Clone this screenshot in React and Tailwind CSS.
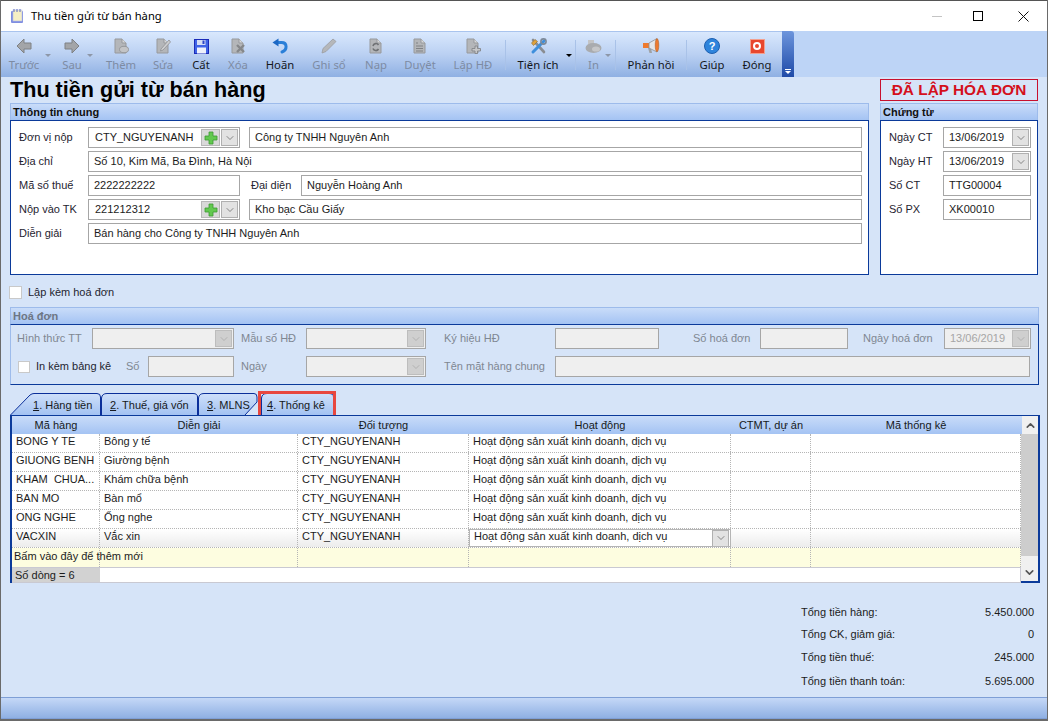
import { ChevronDown, ChevronUp } from "lucide-react";

const gray = "#a3a5a8";
const grayDark = "#7f8184";

function ArrowIcon({ flip }) {
  return (
    <svg width="16" height="16" viewBox="0 0 16 16" style={flip ? { transform: "scaleX(-1)" } : undefined}>
      <path d="M8 1 L1 8 L8 15 L8 11 L15 11 L15 5 L8 5 Z" fill={gray} stroke={grayDark} strokeWidth="1" strokeLinejoin="round" />
    </svg>
  );
}

function DocBase({ children }) {
  return (
    <svg width="16" height="16" viewBox="0 0 16 16">
      <path d="M2 1 H9 L13 5 V15 H2 Z" fill="#b4b6b9" stroke="#97999c" strokeWidth="1" />
      <path d="M9 1 V5 H13" fill="#d8d9da" stroke="#97999c" strokeWidth="1" />
      {children}
    </svg>
  );
}

const AddIcon = () => (
  <DocBase>
    <ellipse cx="11" cy="11.5" rx="4.5" ry="3.2" fill="#c3c4c6" stroke="#97999c" />
  </DocBase>
);
const EditIcon = () => (
  <DocBase>
    <path d="M6 11 L14 2 L15.5 4 L8 12 L5.5 13 Z" fill="#cfd0d2" stroke="#8f9194" strokeWidth="0.8" />
  </DocBase>
);
const DeleteIcon = () => (
  <DocBase>
    <path d="M7 7 L14 14 M14 7 L7 14" stroke="#85878a" strokeWidth="2.4" />
  </DocBase>
);
const ReloadIcon = () => (
  <DocBase>
    <path d="M5 8 A3 3 0 0 1 10.5 7 M10.5 11 A3 3 0 0 1 5 10.5" fill="none" stroke="#6f7174" strokeWidth="1.6" />
  </DocBase>
);
const ListIcon = () => (
  <DocBase>
    <path d="M4 5 H6 M4 8 H11 M4 10.5 H11 M4 13 H11" stroke="#808285" strokeWidth="1.1" />
  </DocBase>
);
const InvoiceIcon = () => (
  <DocBase>
    <path d="M10 8 H12.5 V10.5 H15.5 V13 H12.5 V15.5 H10 V13 H7 V10.5 H10 Z" fill="#c6c7c9" stroke="#85878a" strokeWidth="0.9" />
  </DocBase>
);

function SaveIcon() {
  return (
    <svg width="15" height="15" viewBox="0 0 15 15">
      <rect x="0.5" y="0.5" width="14" height="14" fill="#3f63e6" stroke="#1a2bb8" />
      <rect x="3" y="1" width="8.5" height="5" fill="#d5ddf4" />
      <rect x="8.5" y="1.5" width="2" height="3.5" fill="#2b45c8" />
      <rect x="3" y="8.5" width="9" height="6" fill="#eef1fb" />
    </svg>
  );
}

function UndoIcon() {
  return (
    <svg width="16" height="16" viewBox="0 0 16 16">
      <path d="M5.5 4.5 H9.5 C15.5 4.5 15.5 12 10 14" fill="none" stroke="#2a7fd8" strokeWidth="3" strokeLinecap="round" />
      <path d="M0.5 4.5 L6.5 0.5 L6.5 8.5 Z" fill="#1c68c4" />
    </svg>
  );
}

function PencilIcon() {
  return (
    <svg width="16" height="16" viewBox="0 0 16 16">
      <path d="M1 15 L2 10.5 L12 1 L15 3.5 L5 13.5 Z" fill="#b5b7ba" stroke="#9a9c9f" strokeWidth="0.8" />
    </svg>
  );
}

function ToolsIcon() {
  return (
    <svg width="17" height="17" viewBox="0 0 17 17">
      <path d="M3 2 L14 14" stroke="#8a8d92" strokeWidth="2.6" strokeLinecap="round" />
      <path d="M1.5 5 L5 1.5 L7.5 3.5 L3.5 7.5 Z" fill="#e0a23c" stroke="#8a6a2a" strokeWidth="0.6" />
      <path d="M14 3 L3 14" stroke="#3e8fdc" strokeWidth="3" strokeLinecap="round" />
      <circle cx="13.5" cy="3.5" r="2.6" fill="none" stroke="#7c8a9a" strokeWidth="1.6" />
    </svg>
  );
}

function PrinterIcon() {
  return (
    <svg width="17" height="17" viewBox="0 0 17 17">
      <path d="M3 2 H9 V7 H3 Z" fill="#c3c4c6" />
      <ellipse cx="8.5" cy="10" rx="8" ry="5" fill="#a9abae" />
      <ellipse cx="11" cy="11" rx="4" ry="2.6" fill="#c5c6c8" />
    </svg>
  );
}

function MegaphoneIcon() {
  return (
    <svg width="18" height="18" viewBox="0 0 18 18">
      <path d="M6 11 L9 11 L10 16 L7.5 16 Z" fill="#a0a2a5" />
      <path d="M1 6 H7 V11 H1 Z" fill="#ee7a2e" />
      <path d="M7 6 L15 1.5 V15 L7 11 Z" fill="#e4e6e9" stroke="#8d9094" strokeWidth="0.8" />
      <ellipse cx="15" cy="8.2" rx="1.8" ry="6.6" fill="#ee7a2e" stroke="#a85a22" strokeWidth="0.5" />
    </svg>
  );
}

function HelpIcon() {
  return (
    <div className="w-[16px] h-[16px] rounded-full bg-[#2e84dc] border border-[#1d5fb0] flex items-center justify-center text-white text-[11px] font-bold leading-none">
      ?
    </div>
  );
}

function CloseIcon() {
  return (
    <div className="w-[15px] h-[15px] bg-[#e8472e] border border-[#f2a08f] flex items-center justify-center">
      <div className="w-[8px] h-[8px] rounded-full border-2 border-white" />
    </div>
  );
}

function ToolItem({ label, width, icon, off, caret, className = "" }) {
  return (
    <div className={`relative flex flex-col items-center h-full shrink-0 pt-[5px] ${width} ${className}`}>
      <div className="h-[18px] flex items-center justify-center">{icon}</div>
      <span className={`mt-[2px] text-[11.3px] leading-[16px] whitespace-nowrap ${off ? "text-[#7d8ba3]" : "text-[#14171c]"}`} style={{ fontFamily: '"Noto Sans", sans-serif' }}>{label}</span>
      {caret}
    </div>
  );
}

const ToolSep = () => <div className="w-px h-[30px] mt-[8px] bg-[#e8f0fc] border-l border-[#a9c2e8] shrink-0" />;

const GrayCaret = ({ className }) => <span className={`absolute top-[22px] w-0 h-0 border-x-[3px] border-x-transparent border-t-[3px] border-t-[#8d97a8] ${className}`} />;

function Toolbar() {
  return (
    <div className="h-[46px] flex bg-[#bdd4f6] shrink-0">
      <div className="w-[781px] flex bg-gradient-to-b from-[#d9e8fd] via-[#bad0f2] to-[#8fb0e3] border-t border-[#a9c4ee]">
        <ToolItem label="Trước" width="w-[46px]" icon={<ArrowIcon />} off caret={<GrayCaret className="right-[-4px]" />} />
        <ToolItem label="Sau" width="w-[50px]" icon={<ArrowIcon flip />} off caret={<GrayCaret className="right-[4px]" />} />
        <ToolItem label="Thêm" width="w-[48px]" icon={<AddIcon />} off />
        <ToolItem label="Sửa" width="w-[36px]" icon={<EditIcon />} off />
        <ToolItem label="Cất" width="w-[40px]" icon={<SaveIcon />} />
        <ToolItem label="Xóa" width="w-[34px]" icon={<DeleteIcon />} off />
        <ToolItem label="Hoãn" width="w-[50px]" icon={<UndoIcon />} />
        <ToolItem label="Ghi sổ" width="w-[48px]" icon={<PencilIcon />} off />
        <ToolItem label="Nạp" width="w-[46px]" icon={<ReloadIcon />} off />
        <ToolItem label="Duyệt" width="w-[42px]" icon={<ListIcon />} off />
        <ToolItem label="Lập HĐ" width="w-[64px]" icon={<InvoiceIcon />} off />
        <ToolSep />
        <ToolItem
          label="Tiện ích"
          width="w-[69px]"
          icon={<ToolsIcon />}
          className="pr-[5px]"
          caret={<span className="absolute top-[22px] right-[3px] w-0 h-0 border-x-[3px] border-x-transparent border-t-[3px] border-t-black" />}
        />
        <ToolSep />
        <ToolItem label="In" width="w-[39px]" icon={<PrinterIcon />} off className="pr-[4px]" caret={<GrayCaret className="right-[4px]" />} />
        <ToolSep />
        <ToolItem label="Phản hồi" width="w-[70px]" icon={<MegaphoneIcon />} />
        <ToolSep />
        <ToolItem label="Giúp" width="w-[50px]" icon={<HelpIcon />} />
        <ToolItem label="Đóng" width="w-[40px]" icon={<CloseIcon />} />
      </div>
      <div className="w-[12px] rounded-tr-[3px] bg-gradient-to-b from-[#6d95dc] to-[#1f4aa8] flex flex-col items-center justify-end pb-[3px]">
        <span className="w-[6px] h-px bg-white mb-px" />
        <span className="w-0 h-0 border-x-[3px] border-x-transparent border-t-[3px] border-t-white" />
      </div>
    </div>
  );
}

function TitleBar() {
  return (
    <div className="h-[30px] bg-white flex items-center shrink-0" style={{ fontFamily: '"Noto Sans", sans-serif' }}>
      <svg className="ml-[9px]" width="14" height="16" viewBox="0 0 14 16">
        <rect x="1" y="3" width="12" height="12" rx="1" fill="#7f8ee0" />
        <rect x="3" y="2" width="9" height="11" fill="#f6efc4" stroke="#b9c0e6" strokeWidth="0.6" />
        <path d="M4 1 V4 M7 1 V4 M10 1 V4" stroke="#5b6bc0" strokeWidth="1" />
      </svg>
      <span className="ml-[7px] text-[11.2px] text-black">Thu tiền gửi từ bán hàng</span>
      <div className="ml-auto flex items-center">
        <span className="w-[10px] h-px bg-[#c4c4c4] mr-[31px]" />
        <span className="w-[10px] h-[10px] border border-black mr-[35px]" />
        <svg className="mr-[18px]" width="11" height="11" viewBox="0 0 11 11">
          <path d="M0.5 0.5 L10.5 10.5 M10.5 0.5 L0.5 10.5" stroke="#111" strokeWidth="1" />
        </svg>
      </div>
    </div>
  );
}

function PanelHead({ title, muted }) {
  return (
    <div className={`h-[17px] px-[2px] flex items-center bg-gradient-to-b from-[#c9dcf9] to-[#a4c3f3] border-t border-x border-t-[#9dbbeb] border-x-[#9dbbeb] border-b-0 text-[11px] font-bold ${muted ? "text-[#6d7684]" : "text-[#111]"}`}>
      {title}
    </div>
  );
}

function Field({ value, width, className = "", off }) {
  return (
    <div className={`h-[21px] shrink-0 flex items-center border border-[#a6a6a6] pl-[5px] text-[11px] whitespace-nowrap overflow-hidden ${off ? "bg-[#efefef] text-[#a6a6a6]" : "bg-white text-[#1c1c1c]"} ${width} ${className}`}>
      {value}
    </div>
  );
}

function DropBtn({ off }) {
  return (
    <span className={`w-[17px] h-[17px] shrink-0 flex items-center justify-center border ${off ? "bg-[#cfcfcf] border-[#bdbdbd] text-[#9d9d9d]" : "bg-[#e2e2e2] border-[#b0b0b0] text-[#444]"}`}>
      <ChevronDown size={12} strokeWidth={1.2} />
    </span>
  );
}

function Combo({ value, width, className = "", off, plus }) {
  return (
    <div className={`h-[21px] shrink-0 flex items-center border border-[#a6a6a6] pl-[6px] pr-px text-[11px] ${off ? "bg-[#efefef] text-[#a6a6a6]" : "bg-white text-[#1c1c1c]"} ${width} ${className}`}>
      <span className="flex-1 whitespace-nowrap">{value}</span>
      {plus && (
        <span className="w-[19px] h-[17px] mr-px bg-[#d9d9d9] border border-[#b8b8b8] flex items-center justify-center">
          <svg width="14" height="14" viewBox="0 0 14 14">
            <path d="M5 1 H9 V5 H13 V9 H9 V13 H5 V9 H1 V5 H5 Z" fill="#62c94f" stroke="#3d9a33" strokeWidth="0.8" />
          </svg>
        </span>
      )}
      <DropBtn off={off} />
    </div>
  );
}

function Label({ children, width, className = "", off }) {
  return (
    <span className={`shrink-0 text-[11px] whitespace-nowrap ${off ? "text-[#7f8792]" : "text-[#1f2430]"} ${width} ${className}`}>
      {children}
    </span>
  );
}

function GeneralPanel() {
  return (
    <div className="w-[859px] h-[172px] flex flex-col">
      <PanelHead title="Thông tin chung" />
      <div className="flex-1 bg-white border border-[#0b3a9a] pl-[8px] pr-[4px] pt-[6px] flex flex-col gap-[3px]">
        <div className="flex items-center">
          <Label width="w-[69px]">Đơn vị nộp</Label>
          <Combo value="CTY_NGUYENANH" plus width="w-[152px]" />
          <Field value="Công ty TNHH Nguyên Anh" width="w-[613px]" className="ml-[9px]" />
        </div>
        <div className="flex items-center">
          <Label width="w-[69px]">Địa chỉ</Label>
          <Field value="Số 10, Kim Mã, Ba Đình, Hà Nội" width="w-[774px]" />
        </div>
        <div className="flex items-center">
          <Label width="w-[69px]">Mã số thuế</Label>
          <Field value="2222222222" width="w-[152px]" />
          <Label width="w-[50px]" className="ml-[11px]">Đại diện</Label>
          <Field value="Nguyễn Hoàng Anh" width="w-[561px]" />
        </div>
        <div className="flex items-center">
          <Label width="w-[69px]">Nộp vào TK</Label>
          <Combo value="221212312" plus width="w-[152px]" />
          <Field value="Kho bạc Cầu Giấy" width="w-[613px]" className="ml-[9px]" />
        </div>
        <div className="flex items-center">
          <Label width="w-[69px]">Diễn giải</Label>
          <Field value="Bán hàng cho Công ty TNHH Nguyên Anh" width="w-[774px]" />
        </div>
      </div>
    </div>
  );
}

function VoucherPanel() {
  return (
    <div className="w-[158px] h-[172px] flex flex-col">
      <PanelHead title="Chứng từ" />
      <div className="flex-1 bg-white border border-[#0b3a9a] pl-[8px] pt-[6px] flex flex-col gap-[3px]">
        <div className="flex items-center">
          <Label width="w-[54px]">Ngày CT</Label>
          <Combo value="13/06/2019" width="w-[88px]" className="!pl-[5px]" />
        </div>
        <div className="flex items-center">
          <Label width="w-[54px]">Ngày HT</Label>
          <Combo value="13/06/2019" width="w-[88px]" className="!pl-[5px]" />
        </div>
        <div className="flex items-center">
          <Label width="w-[54px]">Số CT</Label>
          <Field value="TTG00004" width="w-[88px]" />
        </div>
        <div className="flex items-center">
          <Label width="w-[54px]">Số PX</Label>
          <Field value="XK00010" width="w-[88px]" />
        </div>
      </div>
    </div>
  );
}

function InvoicePanel() {
  return (
    <div className="w-[1029px] h-[78px] flex flex-col">
      <PanelHead title="Hoá đơn" muted />
      <div className="flex-1 border border-[#0b3a9a] border-l-[#9dbbeb] pl-[6px] pt-[3px]">
        <div className="flex items-center">
          <Label off width="w-[75px]">Hình thức TT</Label>
          <Combo off width="w-[142px]" />
          <Label off width="w-[65px]" className="ml-[7px]">Mẫu số HĐ</Label>
          <Combo off width="w-[120px]" />
          <Label off width="w-[111px]" className="ml-[18px]">Ký hiệu HĐ</Label>
          <Field off width="w-[104px]" />
          <Label off width="w-[67px]" className="ml-[34px]">Số hoá đơn</Label>
          <Field off width="w-[88px]" />
          <Label off width="w-[81px]" className="ml-[15px]">Ngày hoá đơn</Label>
          <Combo off value="13/06/2019" width="w-[87px]" className="!pl-[5px]" />
        </div>
        <div className="flex items-center mt-[7px]">
          <span className="w-[12px] h-[12px] bg-white border border-[#c9c9c9] ml-px shrink-0" />
          <Label width="w-[90px]" className="ml-[6px]">In kèm bảng kê</Label>
          <Label off width="w-[22px]">Số</Label>
          <Field off width="w-[86px]" />
          <Label off width="w-[65px]" className="ml-[7px]">Ngày</Label>
          <Combo off width="w-[120px]" />
          <Label off width="w-[111px]" className="ml-[18px]">Tên mặt hàng chung</Label>
          <Field off width="w-[475px]" />
        </div>
      </div>
    </div>
  );
}

function TabShape({ path, width, id }) {
  return (
    <svg className="absolute inset-0" width={width} height="25" viewBox={`0 0 ${width} 25`}>
      <defs>
        <linearGradient id={id} x1="0" y1="0" x2="0" y2="1">
          <stop offset="0" stopColor="#cfe0fa" />
          <stop offset="1" stopColor="#a3c2f2" />
        </linearGradient>
      </defs>
      <path d={path} fill={`url(#${id})`} stroke="#0b2f9a" strokeWidth="1" />
    </svg>
  );
}

function Tab({ path, width, id, hot, label, left, className = "" }) {
  return (
    <div className={`relative h-[25px] shrink-0 ${className}`} style={{ width }}>
      <TabShape path={path} width={width} id={id} />
      <span className="absolute top-[6px] text-[11px] leading-[18px] text-[#161a22] whitespace-nowrap" style={{ left }}>
        <span className="underline">{hot}</span>
        {label}
      </span>
    </div>
  );
}

function Tabs() {
  return (
    <div className="flex h-[25px] ml-[9px] mt-[5px] relative">
      <Tab width={91} id="t1" left={23} hot="1" label=". Hàng tiền" path="M0.5 25 L20 5 Q22 3.5 24 3.5 L87 3.5 Q90.5 3.5 90.5 7 L90.5 25" />
      <Tab width={97} id="t2" left={9} hot="2" label=". Thuế, giá vốn" path="M0.5 25 L0.5 8 Q1 3.5 6 3.5 L92 3.5 Q96.5 3.5 96.5 7 L96.5 25" />
      <Tab width={62} id="t3" left={9} hot="3" label=". MLNS" path="M0.5 25 L0.5 8 Q1 3.5 6 3.5 L56 3.5 Q59 3.5 59 7 L59 12 L47 25" />
      <Tab width={73} id="t4" left={6} hot="4" label=". Thống kê" className="ml-[1px]" path="M0.5 25 L0.5 8 Q1 3.5 6 3.5 L68 3.5 Q72.5 3.5 72.5 7 L72.5 25" />
      <div className="absolute left-[248px] top-[1px] w-[78px] h-[30px] border-[3px] border-[#e8473f]" />
    </div>
  );
}

const rows = [
  ["BONG Y TE", "Bông y tế"],
  ["GIUONG BENH", "Giường bệnh"],
  ["KHAM  CHUA...", "Khám chữa bệnh"],
  ["BAN MO", "Bàn mổ"],
  ["ONG NGHE", "Ống nghe"],
  ["VACXIN", "Vắc xin"],
];

const cols = ["w-[88px]", "w-[198px]", "w-[171px]", "w-[262px]", "w-[80px]", "w-[210px]"];

function Cell({ col, children, className = "" }) {
  return (
    <div className={`${cols[col]} shrink-0 h-full flex items-center pl-[4px] pb-[3px] text-[11px] text-[#1c1c1c] whitespace-pre overflow-hidden border-r border-dotted border-[#b5b5b5] ${className}`}>
      {children}
    </div>
  );
}

function Grid() {
  return (
    <div className="ml-[9px] w-[1030px] h-[168px] border-2 border-[#0b3a9a] border-t flex flex-col bg-white relative">
      <div className="h-[18px] flex bg-gradient-to-b from-[#c9dcf9] to-[#a4c3f3] shrink-0">
        {["Mã hàng", "Diễn giải", "Đối tượng", "Hoạt động", "CTMT, dự án", "Mã thống kê"].map((h, i) => (
          <div key={h} className={`${cols[i]} shrink-0 text-center text-[11px] leading-[18px] text-[#161a22]`}>
            {h}
          </div>
        ))}
      </div>
      <div className="flex-1 flex min-h-0">
        <div className="w-[1009px] flex flex-col">
          {rows.map((r, i) => {
            const last = i === rows.length - 1;
            return (
              <div key={r[0]} className={`h-[19px] flex border-b border-dotted border-[#b5b5b5] shrink-0 ${last ? "bg-gradient-to-b from-white to-[#ececec]" : ""}`}>
                <Cell col={0}>{r[0]}</Cell>
                <Cell col={1}>{r[1]}</Cell>
                <Cell col={2}>CTY_NGUYENANH</Cell>
                <Cell col={3} className={last ? "bg-white border border-[#b5b5b5] border-solid justify-between pr-px !pb-0" : ""}>
                  <span className={last ? "pb-[3px]" : ""}>Hoạt động sản xuất kinh doanh, dịch vụ</span>
                  {last && <DropBtn />}
                </Cell>
                <Cell col={4} />
                <Cell col={5} />
              </div>
            );
          })}
          <div className="h-[19px] flex bg-[#fdfde0] relative shrink-0">
            <Cell col={0} className="overflow-visible !pl-[2px] !pb-[2px]">Bấm vào đây để thêm mới</Cell>
            <Cell col={1} />
            <Cell col={2} />
            <Cell col={3} />
            <Cell col={4} />
            <Cell col={5} />
          </div>
          <div className="h-[16px] flex border-t border-[#c9c9d2] border-b shrink-0">
            <div className="w-[88px] bg-[#d2d2d2] pl-[3px] text-[11px] leading-[15px] text-[#1c1c1c]">Số dòng = 6</div>
            <div className="flex-1 bg-white border-r border-[#c9c9d2]" />
          </div>
        </div>
        <div className="flex-1 bg-[#f0f0f0] flex flex-col">
          <div className="h-[122px] bg-[#cdcdcd]" />
          <div className="flex-1" />
          <div className="h-[17px] flex items-center justify-center text-[#555]">
            <ChevronDown size={13} strokeWidth={3} />
          </div>
        </div>
        <div className="absolute right-0 top-0 w-[16px] h-[18px] bg-[#f0f0f0] flex items-center justify-center text-[#555]">
          <ChevronUp size={13} strokeWidth={3} />
        </div>
      </div>
    </div>
  );
}

function Totals() {
  const items = [
    ["Tổng tiền hàng:", "5.450.000", "h-[21px]"],
    ["Tổng CK, giảm giá:", "0", "h-[22px]"],
    ["Tổng tiền thuế:", "245.000", "h-[24px]"],
    ["Tổng tiền thanh toán:", "5.695.000", "h-[25px]"],
  ];
  return (
    <div className="w-[233px] ml-auto mr-[13px] mt-[19px] flex flex-col">
      {items.map(([k, v, h]) => (
        <div key={k} className={`flex justify-between items-center text-[11px] text-[#1c1c1c] ${h}`}>
          <span>{k}</span>
          <span>{v}</span>
        </div>
      ))}
    </div>
  );
}

export default function App() {
  return (
    <div className="w-[1048px] h-[721px] overflow-hidden flex flex-col bg-[#d6e4f8] border-x border-[#6a6a6a]" style={{ fontFamily: '"Liberation Sans", Arial, sans-serif' }}>
      <div className="h-px bg-[#555] shrink-0" />
      <TitleBar />
      <Toolbar />
      <div className="flex-1 flex flex-col min-h-0">
        <div className="flex items-start justify-between h-[26px] pl-[9px] pr-[9px]">
          <h1 className="text-[21.6px] leading-[25px] font-bold text-black">Thu tiền gửi từ bán hàng</h1>
          <div className="w-[158px] h-[22px] mt-[2px] border border-[#c8102e] text-center text-[15.4px] leading-[20px] font-bold text-[#d4101c]">ĐÃ LẬP HÓA ĐƠN</div>
        </div>
        <div className="flex pl-[9px] gap-[11px]">
          <GeneralPanel />
          <VoucherPanel />
        </div>
        <div className="flex items-center ml-[8px] mt-[10px] h-[15px]">
          <span className="w-[13px] h-[13px] bg-white border border-[#c9c9c9]" />
          <span className="ml-[6px] text-[11px] text-[#1f2430]">Lập kèm hoá đơn</span>
        </div>
        <div className="ml-[9px] mt-[7px]">
          <InvoicePanel />
        </div>
        <Tabs />
        <Grid />
        <Totals />
        <div className="mt-auto h-[22px] shrink-0 bg-gradient-to-b from-[#c5d8f7] to-[#8fb0e3] border-y border-[#7f9fd6]" />
        <div className="h-[2px] shrink-0 bg-[#6a6a6a]" />
      </div>
    </div>
  );
}
